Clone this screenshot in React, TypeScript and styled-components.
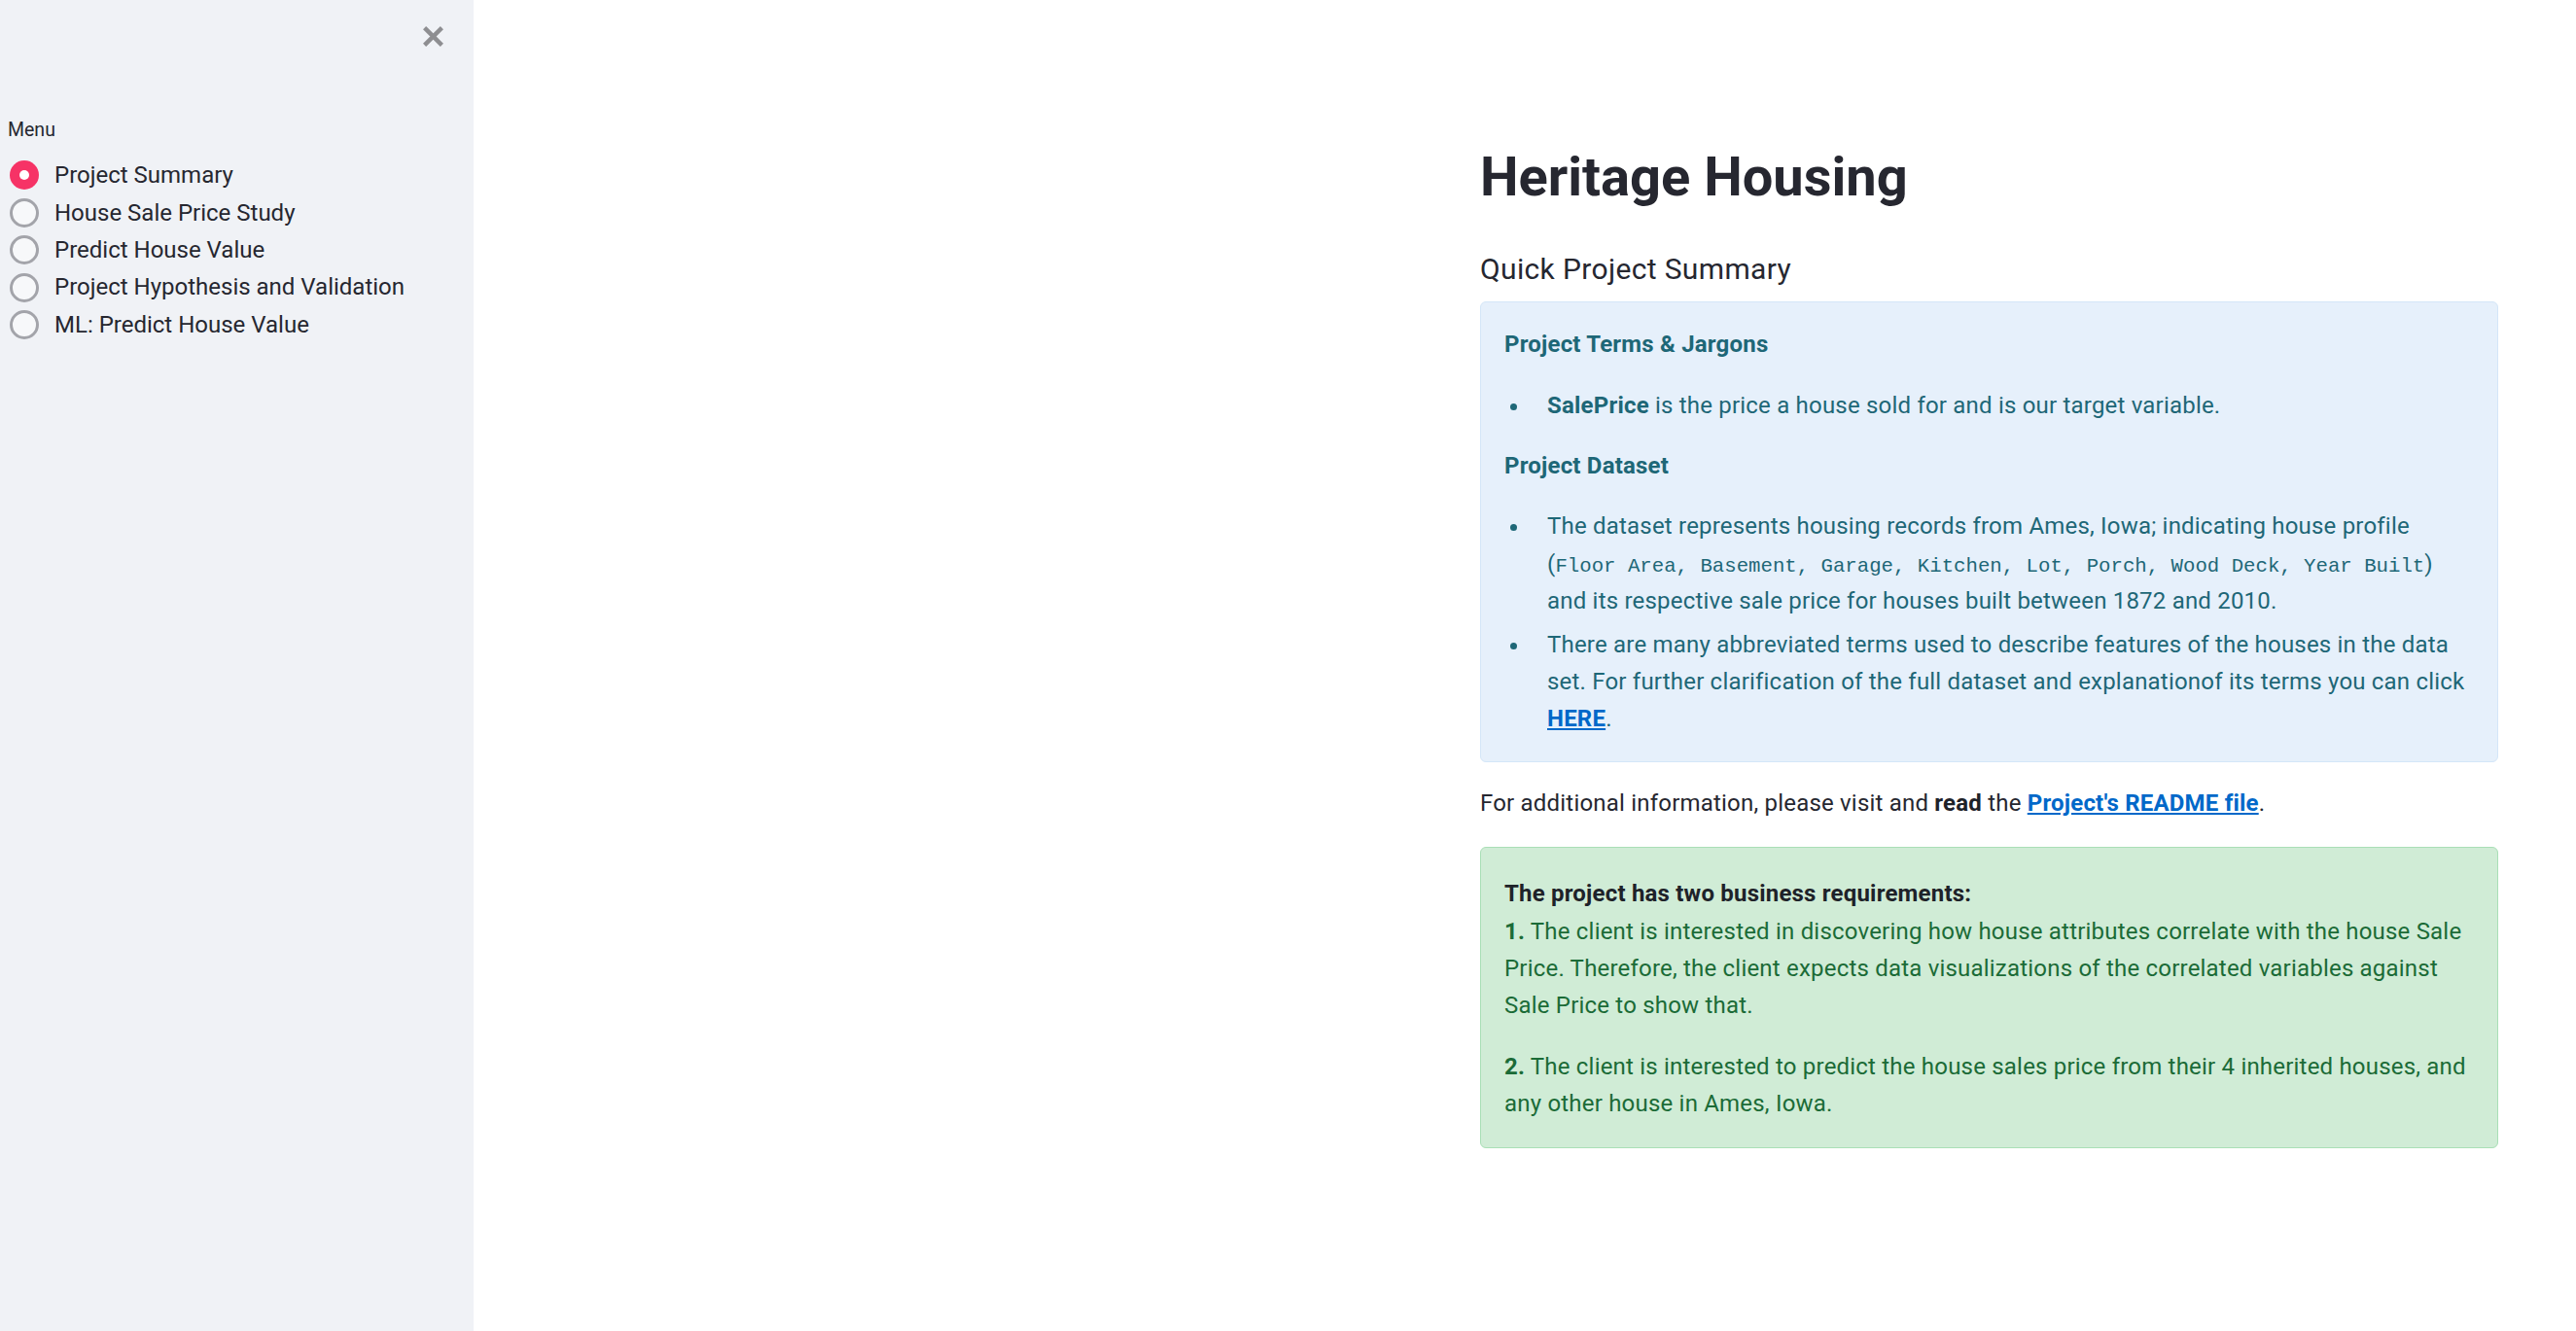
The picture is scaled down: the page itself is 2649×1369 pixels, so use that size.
import React from "react";
import styled, { createGlobalStyle } from "styled-components";

const GlobalStyle = createGlobalStyle`
  html, body { margin: 0; padding: 0; }
  body {
    font-family: Roboto, "Noto Sans", sans-serif;
    color: #262730;
    background: #ffffff;
    -webkit-font-smoothing: antialiased;
  }
  * { box-sizing: border-box; }
`;

const Page = styled.div`
  display: flex;
  min-height: 1369px;
  width: 100%;
`;

const Sidebar = styled.aside`
  width: 487px;
  flex: 0 0 487px;
  background: #f0f2f6;
  padding: 26px 31px 0 8px;
  display: flex;
  flex-direction: column;
`;

const SidebarHeader = styled.div`
  display: flex;
  justify-content: flex-end;
  height: 22px;
`;

const CloseButton = styled.button`
  width: 22px;
  height: 22px;
  padding: 0;
  border: none;
  background: transparent;
  cursor: pointer;
  display: flex;
  align-items: center;
  justify-content: center;
`;

const MenuLabel = styled.div`
  margin-top: 70px;
  font-size: 19.5px;
  line-height: 31.2px;
  color: #262730;
`;

const RadioGroup = styled.div`
  margin-top: 12px;
  display: flex;
  flex-direction: column;
`;

const RadioRow = styled.label`
  display: flex;
  align-items: center;
  gap: 16px;
  height: 38.4px;
  font-size: 24px;
  line-height: 38.4px;
  color: #262730;
  cursor: pointer;
  white-space: nowrap;
`;

const RadioCircle = styled.span<{ $checked: boolean }>`
  margin-left: 2px;
  width: 30px;
  height: 30px;
  border-radius: 50%;
  flex: 0 0 30px;
  display: flex;
  align-items: center;
  justify-content: center;
  background: ${(p) => (p.$checked ? "#f63366" : "#f7f8fa")};
  border: ${(p) => (p.$checked ? "none" : "3px solid #a3a4aa")};
  &::after {
    content: "";
    display: ${(p) => (p.$checked ? "block" : "none")};
    width: 10px;
    height: 10px;
    border-radius: 50%;
    background: #ffffff;
  }
`;

const Main = styled.main`
  flex: 1;
  background: #ffffff;
  padding-top: 149px;
  padding-left: 1035px;
`;

const Content = styled.div`
  width: 1047px;
  display: flex;
  flex-direction: column;
  letter-spacing: 0.2px;
`;

const Title = styled.h1`
  margin: 0 0 43px;
  font-size: 56px;
  line-height: 67.2px;
  font-weight: 700;
  letter-spacing: 0;
  color: #262730;
`;

const SubTitle = styled.h3`
  margin: 0 0 15px;
  font-size: 30px;
  line-height: 36px;
  font-weight: 400;
  letter-spacing: 0.35px;
  color: #262730;
`;

const Alert = styled.div<{ $kind: "info" | "success" }>`
  border-radius: 6px;
  border: 1px solid ${(p) => (p.$kind === "info" ? "#d4e6f8" : "#a9dfb6")};
  background: ${(p) => (p.$kind === "info" ? "#e6f0fb" : "#d0ecd6")};
  color: ${(p) => (p.$kind === "info" ? "#1e6777" : "#1b6b37")};
  padding: ${(p) => (p.$kind === "info" ? "24px 24px" : "28px 24px 25px")};
  margin-bottom: ${(p) => (p.$kind === "info" ? "23px" : "0")};
  font-size: 24px;
  line-height: 38.4px;
`;

const Para = styled.p<{ $last?: boolean }>`
  margin: 0 0 ${(p) => (p.$last ? "0" : "24px")};
  font-size: 24px;
  line-height: 38.4px;
`;

const BodyPara = styled.p`
  margin: 0 0 26px;
  font-size: 24px;
  line-height: 38.4px;
  color: #262730;
`;

const List = styled.ul<{ $last?: boolean }>`
  margin: 0 0 ${(p) => (p.$last ? "0" : "24px")};
  padding: 0;
  list-style: none;
`;

const Item = styled.li`
  display: flex;
  align-items: flex-start;
  margin-bottom: 6px;
  &:last-child { margin-bottom: 0; }
  &::before {
    content: "";
    flex: 0 0 7px;
    width: 7px;
    height: 7px;
    border-radius: 50%;
    background: currentColor;
    margin: 17px 31px 0 6px;
  }
`;

const ItemText = styled.span`
  flex: 1;
  min-width: 0;
`;

const Strong = styled.strong<{ $dark?: boolean }>`
  font-weight: 700;
  color: ${(p) => (p.$dark ? "#1e2229" : "inherit")};
`;

const Code = styled.code`
  font-family: "Liberation Mono", "DejaVu Sans Mono", monospace;
  font-size: 20.7px;
  line-height: 1;
  letter-spacing: 0;
  color: inherit;
`;

const Link = styled.a`
  color: #0068c9;
  font-weight: 700;
  text-decoration: underline;
`;

const items = [
  "Project Summary",
  "House Sale Price Study",
  "Predict House Value",
  "Project Hypothesis and Validation",
  "ML: Predict House Value",
];

export default function App() {
  return (
    <>
      <GlobalStyle />
      <Page>
        <Sidebar>
          <SidebarHeader>
            <CloseButton aria-label="Close sidebar">
              <svg width="21" height="21" viewBox="0 0 20 20">
                <path d="M3 3 L17 17 M17 3 L3 17" stroke="#8e8e91" strokeWidth="4.2" strokeLinecap="square" />
              </svg>
            </CloseButton>
          </SidebarHeader>
          <MenuLabel>Menu</MenuLabel>
          <RadioGroup>
            {items.map((it, i) => (
              <RadioRow key={it}>
                <RadioCircle $checked={i === 0} />
                {it}
              </RadioRow>
            ))}
          </RadioGroup>
        </Sidebar>
        <Main>
          <Content>
            <Title>Heritage Housing</Title>
            <SubTitle>Quick Project Summary</SubTitle>
            <Alert $kind="info">
              <Para>
                <Strong>Project Terms &amp; Jargons</Strong>
              </Para>
              <List>
                <Item>
                  <ItemText>
                    <Strong>SalePrice</Strong> is the price a house sold for and is our target variable.
                  </ItemText>
                </Item>
              </List>
              <Para>
                <Strong>Project Dataset</Strong>
              </Para>
              <List $last>
                <Item>
                  <ItemText>
                    The dataset represents housing records from Ames, Iowa; indicating house profile (
                    <Code>Floor Area, Basement, Garage, Kitchen, Lot, Porch, Wood Deck, Year Built</Code>) and its
                    respective sale price for houses built between 1872 and 2010.
                  </ItemText>
                </Item>
                <Item>
                  <ItemText>
                    There are many abbreviated terms used to describe features of the houses in the data set. For
                    further clarification of the full dataset and explanationof its terms you can click{" "}
                    <Link href="#">HERE</Link>.
                  </ItemText>
                </Item>
              </List>
            </Alert>
            <BodyPara>
              For additional information, please visit and <Strong $dark>read</Strong> the{" "}
              <Link href="#">Project's README file</Link>.
            </BodyPara>
            <Alert $kind="success">
              <Para>
                <Strong $dark>The project has two business requirements:</Strong>
                <br />
                <Strong>1.</Strong> The client is interested in discovering how house attributes correlate with the
                house Sale Price. Therefore, the client expects data visualizations of the correlated variables
                against Sale Price to show that.
              </Para>
              <Para $last>
                <Strong>2.</Strong> The client is interested to predict the house sales price from their 4 inherited
                houses, and any other house in Ames, Iowa.
              </Para>
            </Alert>
          </Content>
        </Main>
      </Page>
    </>
  );
}
